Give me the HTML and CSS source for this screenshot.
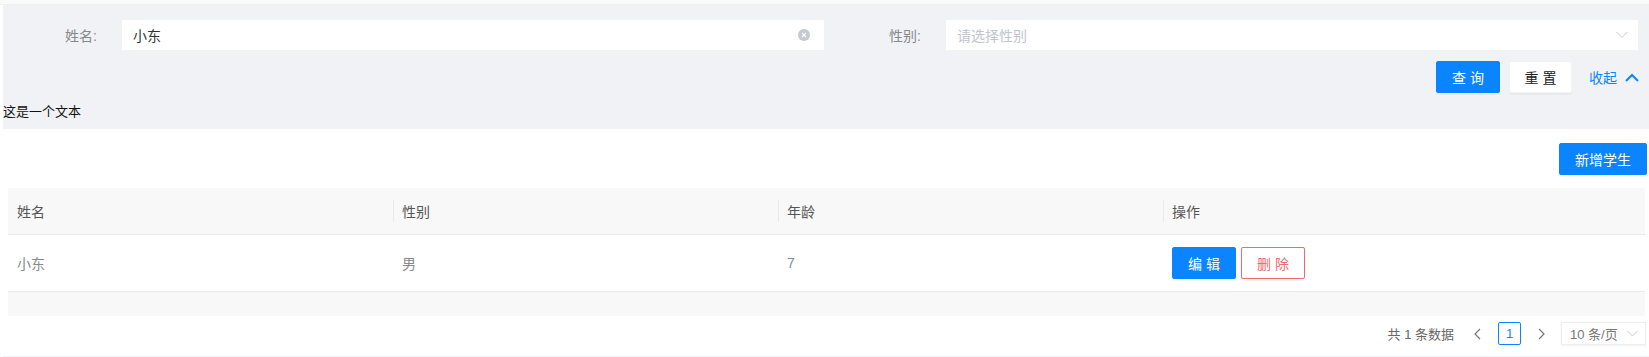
FILE: index.html
```html
<!DOCTYPE html>
<html lang="zh-CN">
<head>
    <meta charset="UTF-8">
    <title>学生管理</title>
    <link rel="stylesheet" href="styles.css">
</head>
<body>
    <div class="topbar"></div>
    <div class="page">
        <div class="search-panel">
            <div class="search-row">
                <div class="field field-name">
                    <label class="field-label">姓名:</label>
                    <div class="input-box">
                        <span class="input-value">小东</span>
                        <svg class="clear-icon" width="12" height="12" viewBox="0 0 12 12">
                            <circle cx="6" cy="6" r="6" fill="#c5c8ce"/>
                            <path d="M4 4 L8 8 M8 4 L4 8" stroke="#fff" stroke-width="1.2"/>
                        </svg>
                    </div>
                </div>
                <div class="field field-sex">
                    <label class="field-label">性别:</label>
                    <div class="input-box">
                        <span class="placeholder">请选择性别</span>
                        <svg class="select-arrow" width="12" height="8" viewBox="0 0 12 8">
                            <polyline points="0.5,1 6,6.5 11.5,1" fill="none" stroke="#c5c8ce" stroke-width="1"/>
                        </svg>
                    </div>
                </div>
            </div>
            <div class="search-actions">
                <button class="btn btn-primary btn-spaced btn-query">查询</button>
                <button class="btn btn-default btn-spaced btn-reset">重置</button>
                <a class="collapse-link">收起
                    <svg width="14" height="9" viewBox="0 0 14 9">
                        <polyline points="1,8 7,2 13,8" fill="none" stroke="#0a85ff" stroke-width="2"/>
                    </svg>
                </a>
            </div>
            <div class="plain-text">这是一个文本</div>
        </div>

        <div class="card">
            <div class="card-toolbar">
                <button class="btn btn-primary btn-add">新增学生</button>
            </div>
            <table class="data-table">
                <colgroup>
                    <col style="width: 385px">
                    <col style="width: 385px">
                    <col style="width: 385px">
                    <col>
                </colgroup>
                <thead>
                    <tr>
                        <th>姓名</th>
                        <th class="sep">性别</th>
                        <th class="sep">年龄</th>
                        <th class="sep">操作</th>
                    </tr>
                </thead>
                <tbody>
                    <tr>
                        <td>小东</td>
                        <td>男</td>
                        <td class="num">7</td>
                        <td>
                            <div class="row-actions">
                                <button class="btn btn-primary btn-spaced btn-small">编辑</button>
                                <button class="btn btn-danger btn-spaced btn-small">删除</button>
                            </div>
                        </td>
                    </tr>
                </tbody>
                <tfoot>
                    <tr><td colspan="4"></td></tr>
                </tfoot>
            </table>
            <div class="pager">
                <span class="pager-total">共 1 条数据</span>
                <svg class="pager-arrow" width="7" height="12" viewBox="0 0 7 12">
                    <polyline points="6,1 1,6 6,11" fill="none" stroke="#777" stroke-width="1.2"/>
                </svg>
                <span class="pager-item">1</span>
                <svg class="pager-arrow" width="7" height="12" viewBox="0 0 7 12">
                    <polyline points="1,1 6,6 1,11" fill="none" stroke="#777" stroke-width="1.2"/>
                </svg>
                <div class="pager-size">
                    <span>10 条/页</span>
                    <svg width="11" height="7" viewBox="0 0 11 7">
                        <polyline points="0.5,1 5.5,6 10.5,1" fill="none" stroke="#c5c8ce" stroke-width="1"/>
                    </svg>
                </div>
            </div>
        </div>
    </div>
</body>
</html>
```

FILE: styles.css
```css
body {
    margin: 0;
    background-color: #fff;
    font-family: "Liberation Sans", "Noto Sans CJK SC", sans-serif;
    font-size: 14px;
    color: #333;
}
.topbar {
    height: 5px;
    background-color: #fafafa;
    border-bottom: 1px solid #eef0f3;
    box-sizing: border-box;
}
.page {
    padding-left: 3px;
    background-color: #f0f2f5;
    padding-bottom: 2px;
    box-shadow: inset 3px 0 0 #fff;
}

/* 検索エリア */
.search-panel {
    background-color: #f0f2f5;
    padding-top: 15px;
    height: 124px;
    box-sizing: border-box;
}
.search-row {
    display: flex;
}
.field {
    display: flex;
    align-items: center;
}
.field-name {
    flex: 0 0 824px;
}
.field-sex {
    flex: 0 0 814px;
}
.field-label {
    width: 94px;
    padding-right: 25px;
    text-align: right;
    color: #888;
    flex-shrink: 0;
    box-sizing: content-box;
}
.input-box {
    flex: 1;
    height: 30px;
    margin-right: 3px;
    background-color: #fff;
    display: flex;
    align-items: center;
    padding: 0 10px 0 11px;
}
.input-value {
    flex: 1;
    color: #333;
}
.placeholder {
    flex: 1;
    color: #c0c4cc;
}
.clear-icon {
    margin-right: 4px;
}
.search-actions {
    display: flex;
    justify-content: flex-end;
    align-items: center;
    gap: 9px;
    margin-top: 11px;
    padding-right: 10px;
    height: 32px;
}
.collapse-link {
    color: #0a85ff;
    margin-left: 8px;
    display: flex;
    align-items: center;
    gap: 8px;
    cursor: pointer;
}
.plain-text {
    margin-top: 10px;
    font-size: 13px;
    line-height: 18px;
    color: #111;
}

/* ボタン */
.btn {
    font-family: inherit;
    font-size: 14px;
    height: 32px;
    border-radius: 2px;
    cursor: pointer;
    padding: 0;
    box-shadow: 0 2px 0 rgba(0, 0, 0, 0.03);
}
.btn-spaced {
    letter-spacing: 0.3em;
    text-indent: 0.3em;
}
.btn-primary {
    background-color: #0a85ff;
    border: 1px solid #0a85ff;
    color: #fff;
}
.btn-default {
    background-color: #fff;
    border: 1px solid #f2f2f2;
    color: #222;
}
.btn-danger {
    background-color: #fff;
    border: 1px solid #ee6b6b;
    color: #ee6b6b;
}
.btn-query {
    width: 64px;
}
.btn-reset {
    width: 63px;
}
.btn-small {
    width: 64px;
}
.btn-add {
    width: 88px;
}
.row-actions {
    display: flex;
    gap: 5px;
}

/* カード */
.card {
    background-color: #fff;
    padding: 14px 3px 11px 5px;
}
.card-toolbar {
    display: flex;
    justify-content: flex-end;
    margin-right: -1px;
}
.data-table {
    width: 1637px;
    margin-top: 13px;
    border-collapse: collapse;
    table-layout: fixed;
}
.data-table th {
    position: relative;
    height: 46px;
    background-color: #f8f8f9;
    border-bottom: 1px solid #e8eaec;
    text-align: left;
    font-weight: normal;
    color: #555;
    padding: 0 9px;
}
.data-table th.sep::before {
    content: "";
    position: absolute;
    left: 0;
    top: 12px;
    width: 1px;
    height: 22px;
    background-color: #e8eaec;
}
.data-table td {
    height: 56px;
    padding: 0 9px;
    border-bottom: 1px solid #e8eaec;
    color: #888;
}
.data-table td.num {
    color: #7d8b99;
}
.data-table tfoot td {
    height: 24px;
    background-color: #f8f8f9;
    border-bottom: none;
}

/* ページャー */
.pager {
    display: flex;
    justify-content: flex-end;
    align-items: center;
    margin-top: 6px;
    height: 23px;
    font-size: 13px;
    color: #666;
}
.pager-total {
    margin-right: 3px;
}
.pager-arrow {
    margin: 0 17px;
}
.pager-item {
    width: 21px;
    height: 21px;
    border: 1px solid #0a85ff;
    border-radius: 2px;
    color: #0a85ff;
    display: flex;
    align-items: center;
    justify-content: center;
}
.pager-size {
    margin-left: -1px;
    width: 85px;
    height: 23px;
    box-sizing: border-box;
    border: 1px solid #eee;
    box-shadow: 0 1px 2px rgba(0, 0, 0, 0.06);
    display: flex;
    align-items: center;
    justify-content: space-between;
    padding: 0 7px 0 8px;
    color: #777;
}
```
